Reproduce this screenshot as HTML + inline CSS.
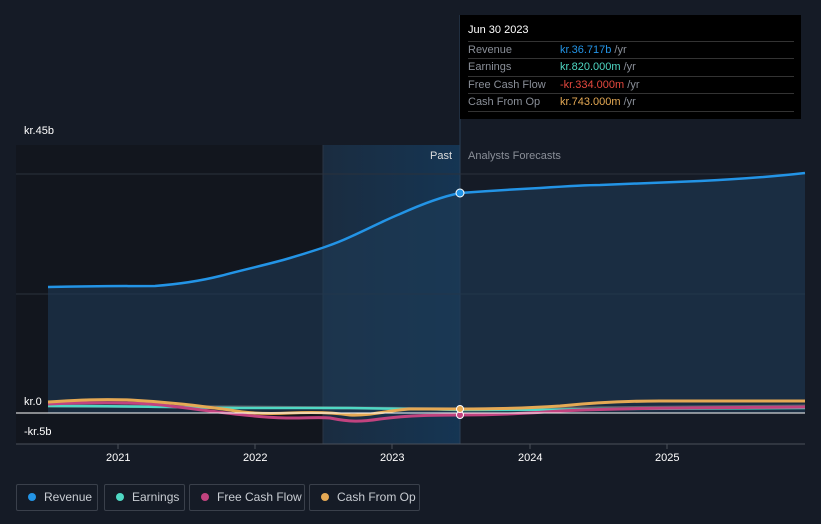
<!DOCTYPE html><html><head><style>
html,body{margin:0;width:821px;height:524px;background:#151b26;font-family:"Liberation Sans",sans-serif;overflow:hidden;position:relative}
.t{position:absolute;font-size:11px;color:#fff}
.tip{position:absolute;left:460px;top:15px;width:341px;height:104px;background:#000;}
.tip .r{position:absolute;left:8px;width:326px;border-top:1px solid #333;font-size:11px;color:#8a8f98;height:17px;line-height:17px}
.lg{position:absolute;top:484px;height:27px;border:1px solid #3a404b;border-radius:2px;font-size:12px;color:#c8ccd2;line-height:25px;box-sizing:border-box;white-space:nowrap}
.lg i{display:inline-block;width:8px;height:8px;border-radius:50%;margin:0 8px 0 11px;vertical-align:0}
</style></head><body>
<svg width="821" height="524" style="position:absolute;left:0;top:0">
<defs><linearGradient id="h" x1="0" x2="1"><stop offset="0" stop-color="#1a2c40"/><stop offset="1" stop-color="#153553"/></linearGradient></defs>
<rect x="16" y="145" width="307" height="299" fill="#12161e"/>
<rect x="323" y="145" width="137" height="299" fill="url(#h)"/>
<line x1="323" y1="145" x2="323" y2="444" stroke="#2a3545"/>
<line x1="460" y1="15" x2="460" y2="444" stroke="#2a4058"/>
<line x1="16" y1="174" x2="805" y2="174" stroke="#2a313c"/>
<line x1="16" y1="294" x2="805" y2="294" stroke="#2a313c"/>
<path d="M48,287 C100,286 140,286 155,286 C180,284 200,281 220,276 C250,268 270,264 290,258 C320,249 335,244 350,237 C370,228 385,220 400,214 C420,205 440,197 460,193 C500,190 520,189 540,188 C570,186 590,185 600,185 C650,183 680,182 700,181 C740,179 770,177 805,173 L805,413 L48,413Z" fill="#1e3a55" opacity=".6"/>
<path d="M48,287 C100,286 140,286 155,286 C180,284 200,281 220,276 C250,268 270,264 290,258 C320,249 335,244 350,237 C370,228 385,220 400,214 C420,205 440,197 460,193 C500,190 520,189 540,188 C570,186 590,185 600,185 C650,183 680,182 700,181 C740,179 770,177 805,173" fill="none" stroke="#2394e6" stroke-width="2.5"/>
<path d="M48,406 L240,407 L460,409 L805,406" fill="none" stroke="#888" stroke-width="3" opacity=".6"/>
<path d="M48,406 C150,406 200,408 250,408 L350,408 C400,409 430,409 460,410 C520,410 560,410 600,409 C700,408 760,408 805,408" fill="none" stroke="#4fd8c4" stroke-width="2.5"/>
<path d="M48,404 C100,402 140,402 170,406 C220,412 260,418 290,418 C310,418 320,417 330,418 C350,422 360,422 380,419 C410,415 440,415 460,415 C500,415 530,413 560,411 C620,408 680,408 805,407" fill="none" stroke="#c1437f" stroke-width="3"/>
<path d="M48,402 C80,400 100,399 130,400 C170,402 200,406 230,410 C250,414 270,414 290,413 C310,412 330,412 350,415 C370,416 390,410 410,409 C430,409 450,409 460,409 C500,409 530,408 560,406 C600,402 630,401 660,401 C720,401 760,401 805,401" fill="none" stroke="#e5a954" stroke-width="3"/>
<line x1="16" y1="413" x2="805" y2="413" stroke="#fff" stroke-width="1"/>
<line x1="16" y1="444" x2="805" y2="444" stroke="#4a505a"/>
<g stroke="#4a505a"><line x1="118" y1="444" x2="118" y2="449"/><line x1="255" y1="444" x2="255" y2="449"/><line x1="392" y1="444" x2="392" y2="449"/><line x1="530" y1="444" x2="530" y2="449"/><line x1="667" y1="444" x2="667" y2="449"/></g>
<circle cx="460" cy="193" r="4" fill="#2394e6" stroke="#fff"/>
<circle cx="460" cy="415" r="3.5" fill="#c1437f" stroke="#fff"/>
<circle cx="460" cy="409" r="3.5" fill="#e5a954" stroke="#fff"/>
</svg>
<div class="t" style="left:24px;top:125px">kr.45b</div>
<div class="t" style="left:24px;top:396px">kr.0</div>
<div class="t" style="left:24px;top:426px">-kr.5b</div>
<div class="t" style="left:430px;top:150px;color:#ddd">Past</div>
<div class="t" style="left:468px;top:150px;color:#8a8f98">Analysts Forecasts</div>
<div class="t" style="left:106px;top:452px">2021</div>
<div class="t" style="left:243px;top:452px">2022</div>
<div class="t" style="left:380px;top:452px">2023</div>
<div class="t" style="left:518px;top:452px">2024</div>
<div class="t" style="left:655px;top:452px">2025</div>
<div class="tip">
<div style="position:absolute;left:8px;top:9px;color:#fff;font-size:11px">Jun 30 2023</div>
<div class="r" style="top:26px">Revenue<span style="position:absolute;left:92px"><b style="font-weight:normal;color:#2394e6">kr.36.717b</b> /yr</span></div>
<div class="r" style="top:43px">Earnings<span style="position:absolute;left:92px"><b style="font-weight:normal;color:#4fd8c4">kr.820.000m</b> /yr</span></div>
<div class="r" style="top:61px">Free Cash Flow<span style="position:absolute;left:92px"><b style="font-weight:normal;color:#e5483e">-kr.334.000m</b> /yr</span></div>
<div class="r" style="top:78px;border-bottom:1px solid #333">Cash From Op<span style="position:absolute;left:92px"><b style="font-weight:normal;color:#e5a954">kr.743.000m</b> /yr</span></div>
</div>
<div class="lg" style="left:16px;width:82px"><i style="background:#2394e6"></i>Revenue</div>
<div class="lg" style="left:104px;width:81px"><i style="background:#4fd8c4"></i>Earnings</div>
<div class="lg" style="left:189px;width:116px"><i style="background:#c1437f"></i>Free Cash Flow</div>
<div class="lg" style="left:309px;width:111px"><i style="background:#e5a954"></i>Cash From Op</div>
</body></html>
